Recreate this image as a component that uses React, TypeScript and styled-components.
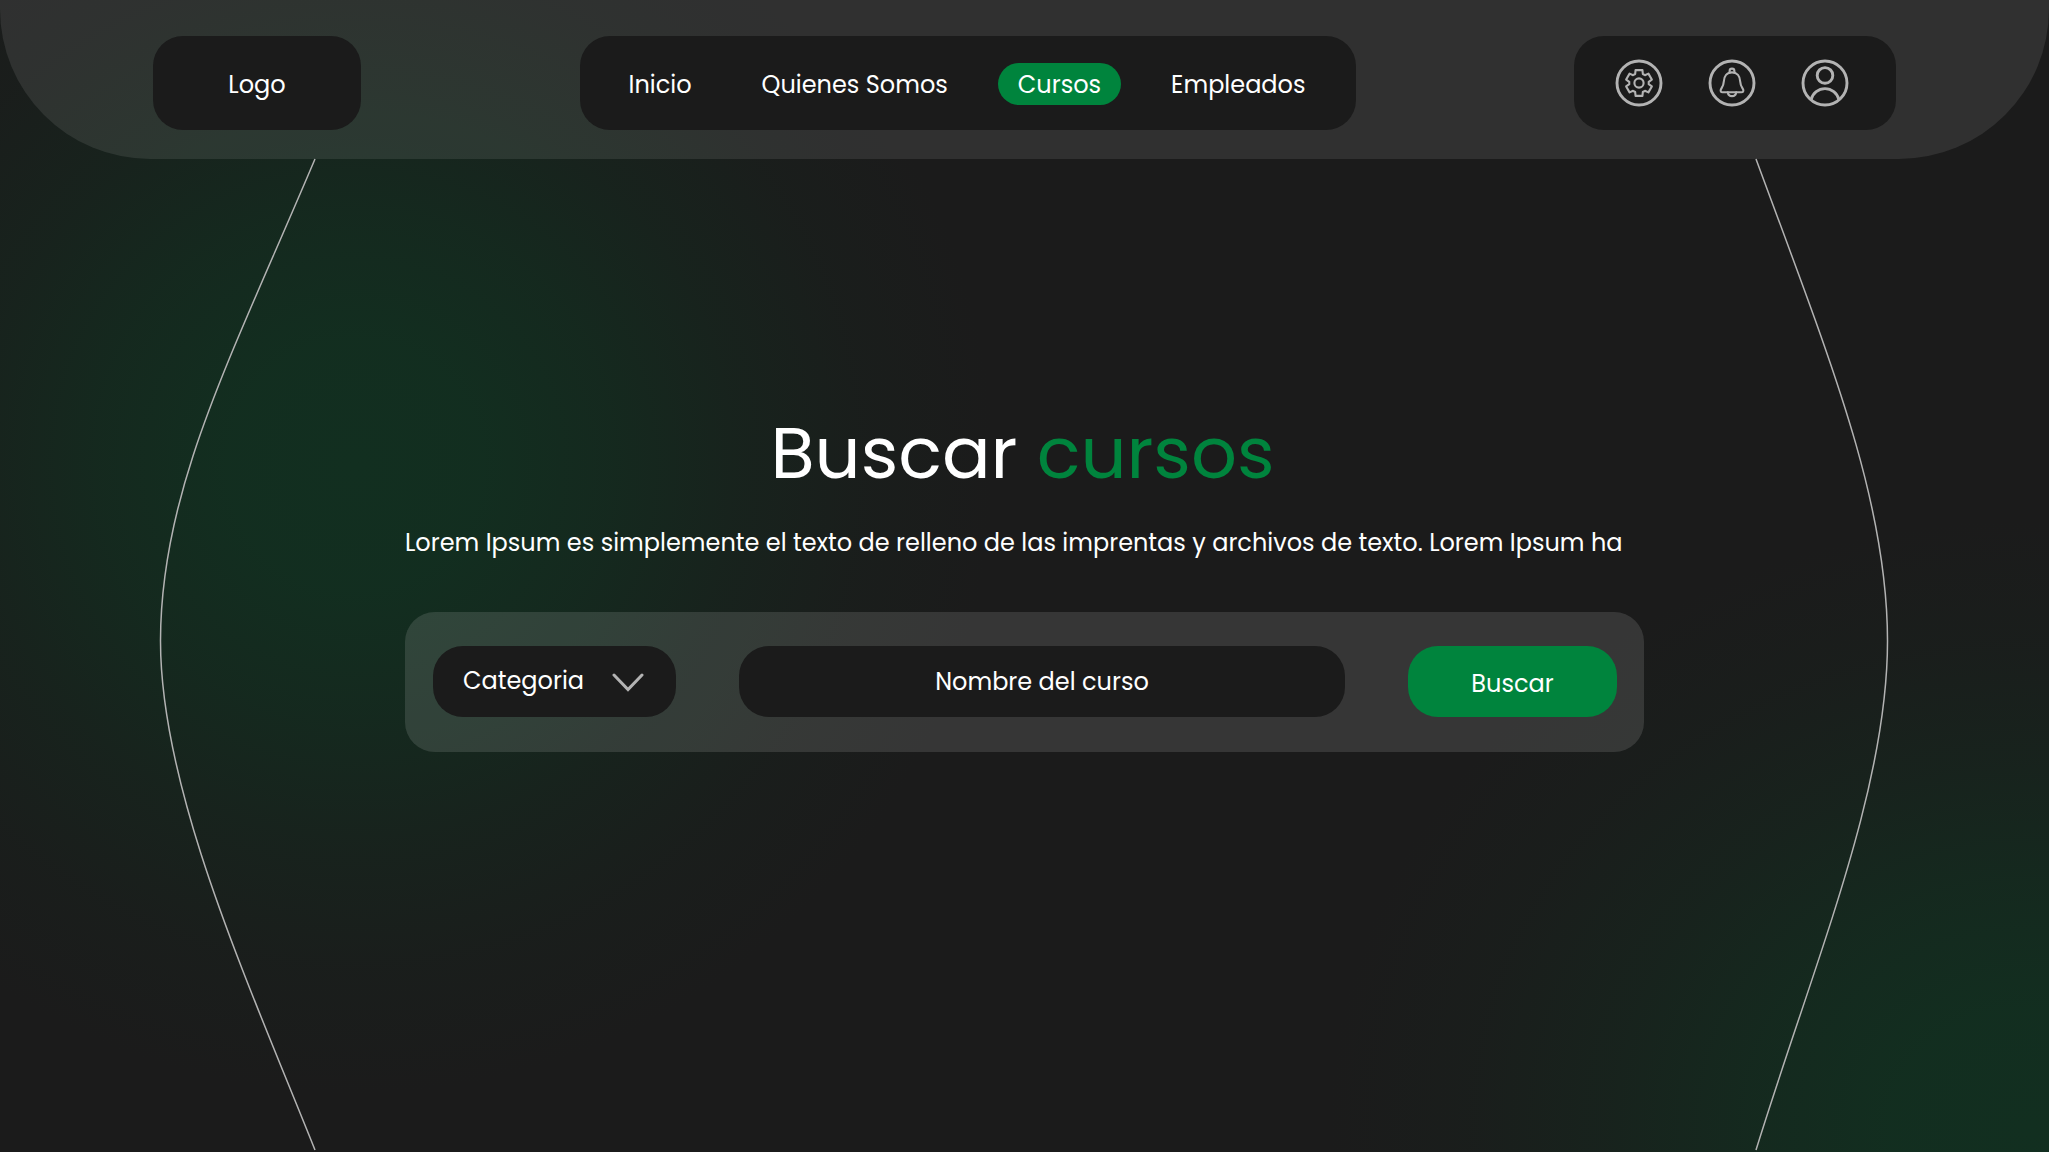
import React from "react";
import styled, { createGlobalStyle } from "styled-components";

const GlobalStyle = createGlobalStyle`
  *, *::before, *::after { box-sizing: border-box; }
  body {
    margin: 0;
    background: #1b1b1b;
    color: #ffffff;
    font-family: Poppins, Inter, "Open Sans", sans-serif;
    font-size: 24px;
    line-height: 36px;
  }
`;

const Page = styled.div`
  position: relative;
  min-height: 100vh;
  overflow: hidden;
  background:
    radial-gradient(ellipse 640px 630px at 355px 465px,
      rgba(18, 47, 32, 1) 0%, rgba(18, 47, 32, 0.95) 20%, rgba(18, 47, 32, 0.71) 40%,
      rgba(18, 47, 32, 0.38) 60%, rgba(18, 47, 32, 0.13) 80%, rgba(18, 47, 32, 0) 100%),
    radial-gradient(ellipse 700px 610px at 99% 98%,
      rgba(18, 47, 32, 1) 0%, rgba(18, 47, 32, 0.95) 20%, rgba(18, 47, 32, 0.71) 40%,
      rgba(18, 47, 32, 0.38) 60%, rgba(18, 47, 32, 0.13) 80%, rgba(18, 47, 32, 0) 100%),
    #1b1b1b;
`;

const Curves = styled.svg`
  position: absolute;
  inset: 0;
  width: 100%;
  height: 100%;
  fill: none;
  stroke: #b3b3b3;
  stroke-width: 1.5;
  pointer-events: none;
`;

const Header = styled.header`
  position: relative;
  display: flex;
  align-items: center;
  justify-content: space-between;
  padding: 36px 153px 29px;
  border-radius: 0 0 150px 150px;
  background: rgba(217, 217, 217, 0.11);
`;

const Bar = styled.div`
  display: flex;
  align-items: center;
  justify-content: center;
  height: 94px;
  border-radius: 30px;
  background: #1b1b1b;
`;

const LogoLink = styled(Bar).attrs({ as: "a" })<{ href?: string }>`
  width: 208px;
  padding-top: 4px;
  color: inherit;
  text-decoration: none;
`;

const Nav = styled(Bar).attrs({ as: "nav" })`
  width: 776px;
  justify-content: space-between;
  padding: 2px 30px 0 29px;
`;

const NavLink = styled.a<{ $active?: boolean }>`
  padding: 4px 20px 2px;
  border-radius: 21px;
  background: ${(p) => (p.$active ? "#00843d" : "transparent")};
  color: inherit;
  text-decoration: none;
  white-space: nowrap;
`;

const Actions = styled(Bar)`
  width: 322px;
  gap: 45px;
  padding-right: 6px;
`;

const IconButton = styled.button`
  display: block;
  width: 48px;
  height: 48px;
  padding: 0;
  border: 0;
  background: none;
  color: #b3b3b3;
  cursor: pointer;

  svg {
    display: block;
    width: 48px;
    height: 48px;
    fill: none;
    stroke: currentColor;
    stroke-width: 2.1;
    stroke-linejoin: round;
    stroke-linecap: round;
  }
`;

const Main = styled.main`
  position: relative;
  width: 100%;
  max-width: 1239px;
  margin: 0 auto;
  padding-top: 250px;
`;

const Title = styled.h1`
  margin: 0;
  padding-right: 4px;
  font-size: 72px;
  line-height: 88px;
  font-weight: 400;
  text-align: center;

  span { color: #00843d; }
`;

const Lead = styled.p`
  margin: 28px 0 51px;
`;

const SearchForm = styled.form`
  display: flex;
  align-items: center;
  gap: 63px;
  padding: 34px 27px 35px 28px;
  border-radius: 30px;
  background: rgba(217, 217, 217, 0.15);
`;

const SelectBox = styled.div`
  display: grid;
  align-items: center;
  width: 243px;

  > * { grid-area: 1 / 1; }

  svg {
    justify-self: end;
    width: 32px;
    height: 20px;
    margin-right: 32px;
    fill: none;
    stroke: #b3b3b3;
    stroke-width: 3;
    stroke-linecap: round;
    pointer-events: none;
  }
`;

const Select = styled.select`
  appearance: none;
  width: 100%;
  height: 71px;
  padding: 0 70px 2px 30px;
  border: 0;
  border-radius: 30px;
  background: #1b1b1b;
  color: #ffffff;
  font: inherit;
`;

const NameInput = styled.input`
  flex: 1;
  min-width: 0;
  height: 71px;
  padding: 0 24px;
  border: 0;
  border-radius: 30px;
  background: #1b1b1b;
  color: #ffffff;
  font: inherit;
  text-align: center;

  &::placeholder { color: #ffffff; opacity: 1; }
`;

const SubmitButton = styled.button`
  width: 209px;
  height: 71px;
  padding: 4px 0 0;
  border: 0;
  border-radius: 30px;
  background: #00843d;
  color: #ffffff;
  font: inherit;
  cursor: pointer;
`;

const gearPath = (() => {
  const profile: [number, number][] = [
    [-23, 9.8], [-15, 13.3], [15, 13.3], [23, 9.8],
  ];
  const points: string[] = [];
  for (let tooth = 0; tooth < 6; tooth++) {
    for (const [offset, radius] of profile) {
      const a = ((tooth * 60 - 90 + offset) * Math.PI) / 180;
      points.push(`${(24 + radius * Math.cos(a)).toFixed(2)} ${(24 + radius * Math.sin(a)).toFixed(2)}`);
    }
  }
  return `M${points.join("L")}Z`;
})();

const Ring = () => <circle cx="24" cy="24" r="22" strokeWidth="2.9" />;

const GearIcon = () => (
  <svg viewBox="0 0 48 48" aria-hidden="true">
    <Ring />
    <path d={gearPath} />
    <circle cx="24" cy="24" r="4.6" />
  </svg>
);

const BellIcon = () => (
  <svg viewBox="0 0 48 48" aria-hidden="true">
    <Ring />
    <path d="M21.6 13.6V12a2.4 2.4 0 0 1 4.8 0v1.6" />
    <path d="M24 13.4C19 13.4 16 17.2 15.8 22.5C15.6 27 13.6 28.8 12.8 30.6C12.3 32.4 13 33.2 14.5 33.2H33.5C35 33.2 35.7 32.4 35.2 30.6C34.4 28.8 32.4 27 32.2 22.5C32 17.2 29 13.4 24 13.4Z" />
    <path d="M19.8 33.4c.6 5 7.8 5 8.4 0" />
  </svg>
);

const UserIcon = () => (
  <svg viewBox="0 0 48 48" aria-hidden="true">
    <Ring />
    <circle cx="24" cy="16.4" r="7.8" strokeWidth="2.9" />
    <path d="M10.2 40.5A14.2 14.2 0 0 1 37.8 40.5" strokeWidth="2.9" />
  </svg>
);

const links = ["Inicio", "Quienes Somos", "Cursos", "Empleados"];

export default function App() {
  return (
    <Page>
      <GlobalStyle />
      <Curves viewBox="0 0 2049 1152" preserveAspectRatio="none" aria-hidden="true">
        <path d="M315 159C230 360 160.5 490 160.5 641C160.5 790 247 980 315 1150" />
        <path d="M1756 159C1830 360 1887.5 500 1887.5 641C1887.5 790 1815 960 1756 1150" />
      </Curves>
      <Header>
        <LogoLink href="#logo">Logo</LogoLink>
        <Nav>
          {links.map((label) => (
            <NavLink key={label} href="#" $active={label === "Cursos"}>
              {label}
            </NavLink>
          ))}
        </Nav>
        <Actions>
          <IconButton type="button" aria-label="Ajustes"><GearIcon /></IconButton>
          <IconButton type="button" aria-label="Notificaciones"><BellIcon /></IconButton>
          <IconButton type="button" aria-label="Perfil"><UserIcon /></IconButton>
        </Actions>
      </Header>
      <Main>
        <Title>Buscar <span>cursos</span></Title>
        <Lead>
          Lorem Ipsum es simplemente el texto de relleno de las imprentas y archivos de texto. Lorem Ipsum ha
        </Lead>
        <SearchForm onSubmit={(e) => e.preventDefault()}>
          <SelectBox>
            <Select aria-label="Categoria" defaultValue="">
              <option value="">Categoria</option>
            </Select>
            <svg viewBox="0 0 32 20" aria-hidden="true">
              <path d="M2 3L16 17.5L30 3" />
            </svg>
          </SelectBox>
          <NameInput type="text" aria-label="Nombre del curso" placeholder="Nombre del curso" />
          <SubmitButton type="submit">Buscar</SubmitButton>
        </SearchForm>
      </Main>
    </Page>
  );
}
